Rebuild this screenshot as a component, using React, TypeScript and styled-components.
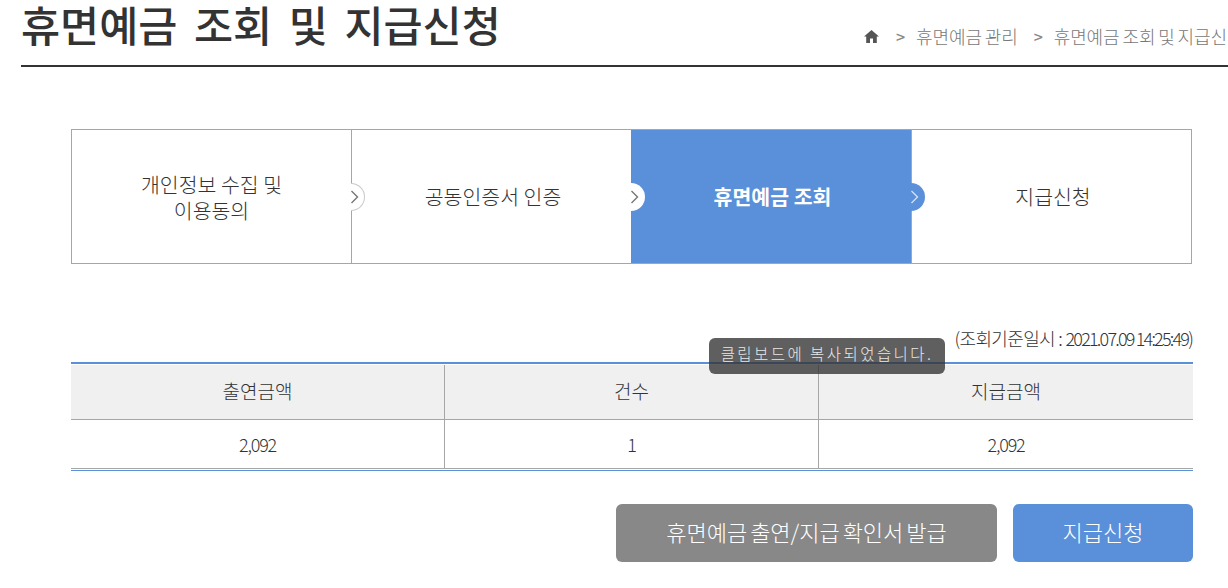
import styled, { createGlobalStyle } from 'styled-components';

const FONT = `"Noto Sans CJK KR", "Noto Sans", sans-serif`;

const GlobalStyle = createGlobalStyle`
  html, body {
    margin: 0;
    padding: 0;
    background: #fff;
    overflow: hidden;
  }
  body {
    font-family: ${FONT};
    color: #333;
  }
`;

const Page = styled.div`
  width: 1228px;
  height: 588px;
  overflow: hidden;
  position: relative;
  box-sizing: border-box;
  padding-left: 21px;
`;

const Header = styled.header`
  display: flex;
  justify-content: space-between;
  align-items: flex-end;
  height: 65px;
  border-bottom: 2px solid #333;
  white-space: nowrap;
`;

const Title = styled.h1`
  margin: 0;
  font-size: 42.5px;
  font-weight: 500;
  line-height: 48px;
  word-spacing: 7px;
  color: #333;
  align-self: flex-start;
`;

const Breadcrumb = styled.nav`
  display: flex;
  align-items: center;
  flex-shrink: 0;
  width: 364px;
  height: 26px;
  margin-bottom: 16px;
  font-size: 18px;
  font-weight: 300;
  letter-spacing: -0.1px;
  word-spacing: -1px;
  color: #777;
  overflow: hidden;
  svg {
    flex-shrink: 0;
    margin-right: 1px;
  }
`;

const Crumb = styled.span`
  flex-shrink: 0;
`;

const CrumbArrow = styled.span`
  flex-shrink: 0;
  margin: 0 11px 0 16px;
  font-size: 16px;
  font-weight: 500;
  color: #888;
`;

const Content = styled.main`
  margin: 62px 35px 0 50px;
`;

const Steps = styled.ol`
  display: grid;
  grid-template-columns: 279px 280px 280px 1fr;
  height: 135px;
  margin: 0;
  padding: 0;
  list-style: none;
  box-sizing: border-box;
  border: 1px solid #a6a6a6;
  width: 1121px;
`;

const Step = styled.li<{ $active?: boolean; $divider?: boolean; $twoLines?: boolean }>`
  position: relative;
  display: flex;
  align-items: center;
  justify-content: center;
  box-sizing: border-box;
  padding-bottom: ${(p) => (p.$twoLines ? '0' : '2px')};
  padding-left: ${(p) => (p.$active || p.$divider ? '3px' : '0')};
  text-align: center;
  font-size: 20.5px;
  font-weight: ${(p) => (p.$active ? 700 : 300)};
  line-height: 26px;
  color: ${(p) => (p.$active ? '#fff' : '#333')};
  background: ${(p) => (p.$active ? '#5a8fd9' : '#fff')};
  border-left: ${(p) => (p.$divider ? '1px solid #a6a6a6' : '0')};
`;

const StepArrow = styled.span<{ $tone: 'line' | 'white' | 'blue' }>`
  position: absolute;
  right: -14px;
  top: 50%;
  z-index: 1;
  width: 14px;
  height: 28px;
  margin-top: -14px;
  box-sizing: border-box;
  border-radius: 0 14px 14px 0;
  display: flex;
  align-items: center;
  background: ${(p) => (p.$tone === 'blue' ? '#5a8fd9' : '#fff')};
  border: ${(p) => (p.$tone === 'line' ? '1.5px solid #c9c9c9' : '0')};
  border-left: 0;
  svg {
    display: block;
    margin-left: -1px;
  }
`;

const Basis = styled.p`
  margin: 62px 1px 0 0;
  height: 25px;
  text-align: right;
  font-size: 18px;
  font-weight: 300;
  line-height: 25px;
  letter-spacing: -0.65px;
  color: #333;
`;

const BasisDate = styled.span`
  letter-spacing: -1.8px;
`;

const Toast = styled.div`
  position: absolute;
  left: 709px;
  top: 338px;
  z-index: 5;
  width: 236px;
  height: 36px;
  border-radius: 6px;
  background: rgba(50, 50, 50, 0.78);
  color: #e8e8e8;
  font-size: 15.5px;
  font-weight: 300;
  line-height: 30px;
  letter-spacing: 2.45px;
  text-align: center;
  white-space: nowrap;
`;

const TableFrame = styled.div`
  margin-top: 11px;
  padding: 1px 0;
  border-top: 2px solid #5a8fd9;
  border-bottom: 1px solid #5a8fd9;
`;

const Table = styled.table`
  width: 100%;
  border-collapse: separate;
  border-spacing: 0;
  table-layout: fixed;
  color: #333;
`;

const Column = styled.col<{ $width: number }>`
  width: ${(p) => p.$width}px;
`;

const HeadCell = styled.th<{ $divider?: boolean }>`
  height: 55px;
  padding: 0 0 4px;
  box-sizing: border-box;
  font-size: 19px;
  font-weight: 300;
  background: #f0f0f0;
  border-bottom: 1px solid #a6a6a6;
  border-left: ${(p) => (p.$divider ? '1px solid #a6a6a6' : '0')};
`;

const BodyCell = styled.td<{ $divider?: boolean }>`
  height: 49px;
  padding: 0;
  box-sizing: border-box;
  text-align: center;
  font-size: 18px;
  font-weight: 300;
  letter-spacing: -1.2px;
  border-bottom: 1px solid #a6a6a6;
  border-left: ${(p) => (p.$divider ? '1px solid #a6a6a6' : '0')};
`;

const Actions = styled.div`
  display: flex;
  justify-content: flex-end;
  gap: 16px;
  margin-top: 33px;
`;

const ActionButton = styled.button<{ $tone: 'gray' | 'blue' }>`
  height: 58px;
  width: ${(p) => (p.$tone === 'gray' ? '381px' : '180px')};
  border: 0;
  border-radius: 6px;
  padding: 0 0 4px;
  font-family: ${FONT};
  font-size: 22px;
  font-weight: 300;
  word-spacing: -2px;
  color: #fff;
  background: ${(p) => (p.$tone === 'gray' ? '#888888' : '#5a8fd9')};
`;

const Chevron = ({ color }: { color: string }) => (
  <svg width="9" height="16" viewBox="0 0 9 16" fill="none">
    <path d="M1.5 2 L7.5 8 L1.5 14" stroke={color} strokeWidth="1.4" />
  </svg>
);

const HomeIcon = () => (
  <svg width="15" height="13" viewBox="0 0 15 13">
    <path d="M7.5 0 L15 6.6 L12.8 6.6 L12.8 13 L9 13 L9 8.6 L6 8.6 L6 13 L2.2 13 L2.2 6.6 L0 6.6 Z" fill="#555" />
  </svg>
);

export default function App() {
  return (
    <Page>
      <GlobalStyle />
      <Header>
        <Title>휴면예금 조회 및 지급신청</Title>
        <Breadcrumb>
          <HomeIcon />
          <CrumbArrow>&gt;</CrumbArrow>
          <Crumb>휴면예금 관리</Crumb>
          <CrumbArrow>&gt;</CrumbArrow>
          <Crumb>휴면예금 조회 및 지급신청</Crumb>
        </Breadcrumb>
      </Header>
      <Content>
        <Steps>
          <Step $twoLines>
            개인정보 수집 및<br />이용동의
            <StepArrow $tone="line">
              <Chevron color="#777" />
            </StepArrow>
          </Step>
          <Step $divider>
            공동인증서 인증
            <StepArrow $tone="white">
              <Chevron color="#777" />
            </StepArrow>
          </Step>
          <Step $active>
            휴면예금 조회
            <StepArrow $tone="blue">
              <Chevron color="#cfe0f5" />
            </StepArrow>
          </Step>
          <Step $divider>지급신청</Step>
        </Steps>
        <Basis>
          (조회기준일시 : <BasisDate>2021.07.09 14:25:49)</BasisDate>
        </Basis>
        <TableFrame>
          <Table>
            <colgroup>
              <Column $width={373} />
              <Column $width={374} />
              <Column $width={375} />
            </colgroup>
            <thead>
              <tr>
                <HeadCell>출연금액</HeadCell>
                <HeadCell $divider>건수</HeadCell>
                <HeadCell $divider>지급금액</HeadCell>
              </tr>
            </thead>
            <tbody>
              <tr>
                <BodyCell>2,092</BodyCell>
                <BodyCell $divider>1</BodyCell>
                <BodyCell $divider>2,092</BodyCell>
              </tr>
            </tbody>
          </Table>
        </TableFrame>
        <Actions>
          <ActionButton $tone="gray">휴면예금 출연/지급 확인서 발급</ActionButton>
          <ActionButton $tone="blue">지급신청</ActionButton>
        </Actions>
      </Content>
      <Toast>클립보드에 복사되었습니다.</Toast>
    </Page>
  );
}
